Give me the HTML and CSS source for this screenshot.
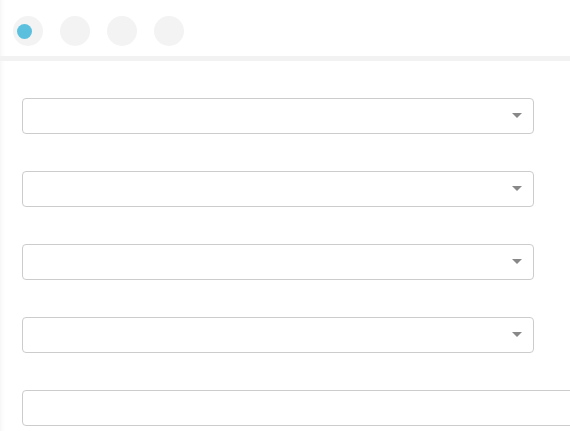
FILE: index.html
```html
<!DOCTYPE html>
<html>
<head>
<meta charset="utf-8">
<link rel="stylesheet" href="styles.css">
</head>
<body>
<div class="page">
  <div class="steps">
    <span class="step active"><span class="dot"></span></span>
    <span class="step"></span>
    <span class="step"></span>
    <span class="step"></span>
  </div>
  <div class="band"></div>
  <div class="form">
    <div class="select"><span class="caret"></span></div>
    <div class="select"><span class="caret"></span></div>
    <div class="select"><span class="caret"></span></div>
    <div class="select"><span class="caret"></span></div>
    <div class="input"></div>
  </div>
</div>
</body>
</html>
```
FILE: styles.css
```css
html, body {
  margin: 0;
  padding: 0;
  background: #fff;
  font-family: "Liberation Sans", Arial, sans-serif;
  overflow: hidden;
}
.page {
  width: 570px;
  height: 431px;
  background: linear-gradient(to right, #f6f6f6 0, #fbfbfb 2px, #fff 5px);
  overflow: hidden;
}
.steps {
  height: 56px;
  display: flex;
  align-items: center;
  gap: 17px;
  padding-left: 13px;
  padding-top: 6px;
  box-sizing: border-box;
}
.step {
  width: 30px;
  height: 30px;
  border-radius: 50%;
  background: #f3f3f3;
  display: flex;
  align-items: center;
  padding-left: 4px;
  box-sizing: border-box;
}
.dot {
  width: 15px;
  height: 15px;
  border-radius: 50%;
  background: #5bc0de;
}
.band {
  height: 5px;
  background: #f2f2f2;
}
.form {
  padding: 37px 0 0 22px;
  display: flex;
  flex-direction: column;
  gap: 37px;
}
.select, .input {
  width: 512px;
  height: 36px;
  box-sizing: border-box;
  border: 1px solid #cccccc;
  border-radius: 4px;
  background: #fff;
  display: flex;
  align-items: center;
  justify-content: flex-end;
  padding-right: 11px;
  flex-shrink: 0;
}
.input {
  width: 600px;
}
.caret {
  width: 0;
  height: 0;
  margin-bottom: 2px;
  border-left: 5px solid transparent;
  border-right: 5px solid transparent;
  border-top: 5px solid #888;
}
```
